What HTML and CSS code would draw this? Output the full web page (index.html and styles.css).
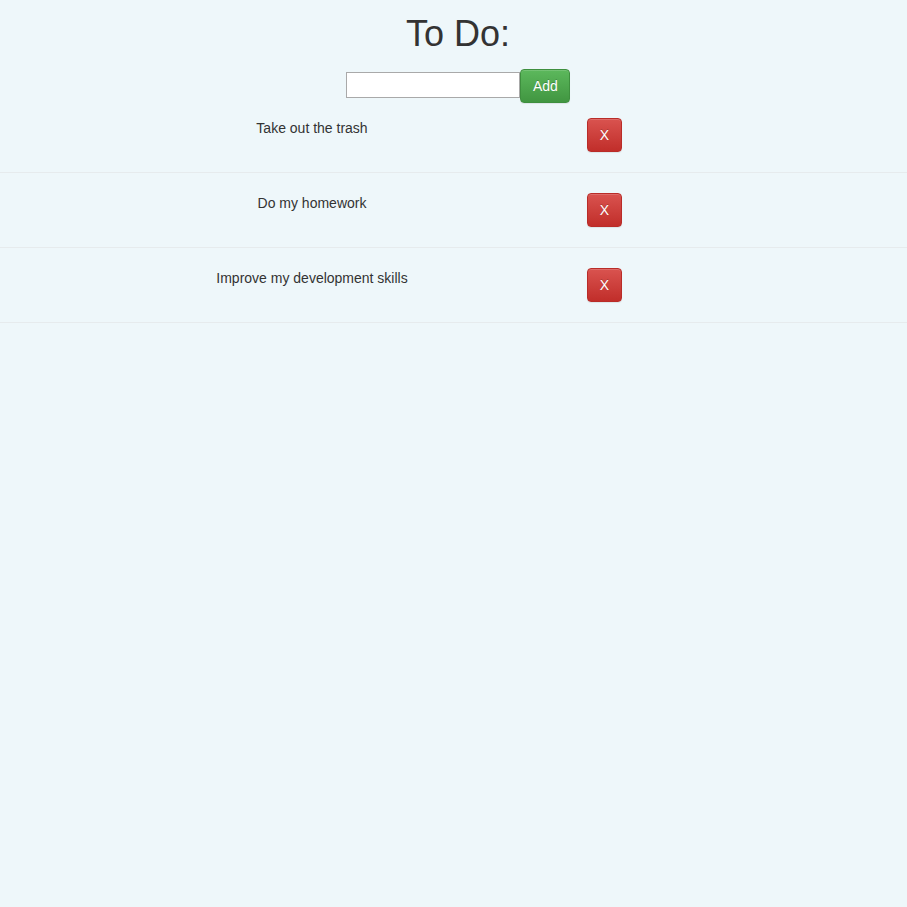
FILE: index.html
```html
<!DOCTYPE html>
<html>
<head>
<meta charset="utf-8">
<title>To Do</title>
<link rel="stylesheet" href="styles.css">
</head>
<body>
<div class="app">
  <header class="header">
    <h1 class="title">To Do:</h1>
    <form class="add-form">
      <input class="add-input" type="text">
      <button class="btn btn-success" type="button">Add</button>
    </form>
  </header>
  <ul class="todo-list">
    <li class="todo-item">
      <div class="todo-inner">
        <span class="todo-text">Take out the trash</span>
        <button class="btn btn-danger" type="button">X</button>
      </div>
    </li>
    <li class="todo-item">
      <div class="todo-inner">
        <span class="todo-text">Do my homework</span>
        <button class="btn btn-danger" type="button">X</button>
      </div>
    </li>
    <li class="todo-item">
      <div class="todo-inner">
        <span class="todo-text">Improve my development skills</span>
        <button class="btn btn-danger" type="button">X</button>
      </div>
    </li>
  </ul>
</div>
</body>
</html>
```

FILE: styles.css
```css
html, body {
  margin: 0;
  padding: 0;
}
body {
  background: #eef7fa;
  color: #333333;
  font-family: "Liberation Sans", Arial, Helvetica, sans-serif;
  font-size: 14px;
  line-height: 20px;
}
.header {
  display: flex;
  flex-direction: column;
  align-items: center;
  padding-left: 9px;
}
.title {
  margin: 14px 0 0;
  font-size: 36px;
  font-weight: 500;
  line-height: 40px;
}
.add-form {
  display: flex;
  align-items: flex-start;
  height: 29px;
  margin-top: 15px;
}
.add-input {
  box-sizing: border-box;
  width: 174px;
  height: 26px;
  margin-top: 3px;
  border: 1px solid #a9a9a9;
  background: #ffffff;
  padding: 1px 2px;
  font-family: inherit;
  font-size: 13px;
}
.btn {
  box-sizing: border-box;
  height: 34px;
  padding: 6px 12px;
  font-family: inherit;
  font-size: 14px;
  line-height: 20px;
  color: #ffffff;
  border-radius: 4px;
  border: 1px solid transparent;
  text-shadow: 0 -1px 0 rgba(0, 0, 0, 0.2);
  box-shadow: inset 0 1px 0 rgba(255, 255, 255, 0.15), 0 1px 1px rgba(0, 0, 0, 0.075);
  cursor: pointer;
}
.btn-success {
  width: 50px;
  background-image: linear-gradient(to bottom, #5cb85c 0%, #419641 100%);
  border-color: #3e8f3e;
}
.btn-danger {
  width: 35px;
  padding: 6px 0;
  background-image: linear-gradient(to bottom, #d9534f 0%, #c12e2a 100%);
  border-color: #b92c28;
}
.todo-list {
  list-style: none;
  margin: 0;
  padding: 0;
}
.todo-item {
  border-bottom: 1px solid #e6ebed;
  padding: 20px 0;
}
.todo-inner {
  display: flex;
  align-items: flex-start;
  padding-left: 79px;
}
.todo-text {
  width: 466px;
  text-align: center;
}
.todo-inner .btn-danger {
  margin-left: 42px;
}
```
